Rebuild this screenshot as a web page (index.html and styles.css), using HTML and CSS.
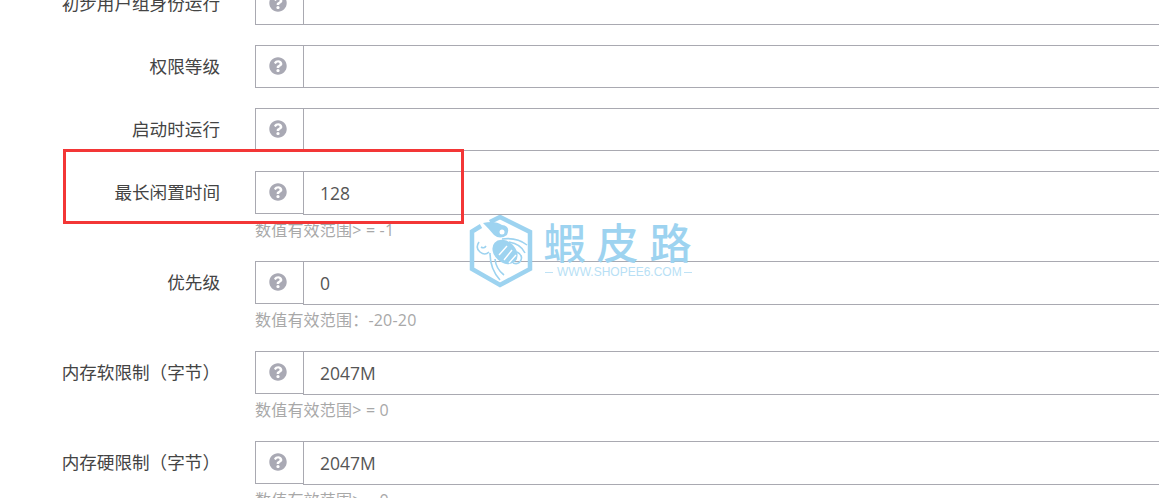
FILE: index.html
```html
<!DOCTYPE html>
<html lang="zh">
<head>
<meta charset="utf-8">
<title>最长闲置时间</title>
<link rel="stylesheet" href="styles.css">
</head>
<body>
<svg width="0" height="0" class="defs"><symbol id="q" viewBox="0 0 512 512"><path d="M504 256c0 136.997-111.043 248-248 248S8 392.997 8 256C8 119.083 119.043 8 256 8s248 111.083 248 248zM262.655 90c-54.497 0-89.255 22.957-116.549 63.758-3.536 5.286-2.353 12.415 2.715 16.258l34.699 26.31c5.205 3.947 12.621 3.008 16.665-2.122 17.864-22.658 30.113-35.797 57.303-35.797 20.429 0 45.698 13.148 45.698 32.958 0 14.976-12.363 22.667-32.534 33.976C247.128 238.528 216 254.941 216 296v4c0 6.627 5.373 12 12 12h56c6.627 0 12-5.373 12-12v-1.333c0-28.462 83.186-29.647 83.186-106.667 0-58.002-60.165-102-116.531-102zM256 338c-25.365 0-46 20.635-46 46 0 25.364 20.635 46 46 46s46-20.636 46-46c0-25.365-20.635-46-46-46z"/></symbol></svg>
<main class="form">
  <div class="row"><label class="label">初步用户组身份运行</label><div class="group"><span class="addon"><svg class="qicon"><use href="#q"/></svg></span><input class="input" value=""></div></div>
  <div class="row"><label class="label">权限等级</label><div class="group"><span class="addon"><svg class="qicon"><use href="#q"/></svg></span><input class="input" value=""></div></div>
  <div class="row"><label class="label">启动时运行</label><div class="group"><span class="addon"><svg class="qicon"><use href="#q"/></svg></span><input class="input" value=""></div></div>
  <div class="row"><label class="label">最长闲置时间</label><div class="group"><span class="addon"><svg class="qicon"><use href="#q"/></svg></span><input class="input filled" value="128"></div><p class="help">数值有效范围&gt; = -1</p></div>
  <div class="row"><label class="label">优先级</label><div class="group"><span class="addon"><svg class="qicon"><use href="#q"/></svg></span><input class="input filled" value="0"></div><p class="help">数值有效范围：-20-20</p></div>
  <div class="row"><label class="label">内存软限制（字节）</label><div class="group"><span class="addon"><svg class="qicon"><use href="#q"/></svg></span><input class="input filled" value="2047M"></div><p class="help">数值有效范围&gt; = 0</p></div>
  <div class="row"><label class="label">内存硬限制（字节）</label><div class="group"><span class="addon"><svg class="qicon"><use href="#q"/></svg></span><input class="input filled" value="2047M"></div><p class="help">数值有效范围&gt; = 0</p></div>
</main>
<div class="highlight"></div>
<svg class="watermark" width="226" height="74" viewBox="0 0 226 74">
  <path class="wm-hex" d="M12 11 L3 16.500 V54 L31 70 L61 54 V17 L31 2 L21 7"/>
  <path class="wm-fill" d="M14 8 Q26 5 33 10 Q42 11 38 20 Q31 25 25 20 Q20 14 14 8Z"/>
  <circle cx="33" cy="17" r="2.500" fill="#fff"/>
  <ellipse class="wm-fill" cx="36" cy="37" rx="14" ry="10.500" transform="rotate(42 36 37)"/>
  <path class="wm-cut" d="M30 40 L38 31 M35 45 L43 35 M40 48 L47 40"/>
  <path class="wm-line" d="M33 24 Q48 22 58 30 M40 27 Q52 29 56 38 M48 37 Q54 40 52 45 Q50 50 44 48 M10 27 Q6 33 11 37 Q16 41 20 37 M12 32 Q15 34 17 31 M21 38 Q21 54 31 65 M26 44 Q27 54 35 60"/>
  <text class="wm-title" x="74.500" y="43.500">蝦皮路</text>
  <path class="wm-dash" d="M76 57.500H84 M215 57.500H223"/>
  <text class="wm-url" x="88" y="61">WWW.SHOPEE6.COM</text>
</svg>
</body>
</html>
```
FILE: styles.css
```css
html, body {
  margin: 0;
  height: 498px;
  overflow: hidden;
  background: #fff;
}
.defs { position: absolute; }
.form {
  display: flex;
  flex-direction: column;
  margin-top: -18px;
  font-family: "Open Sans", "Noto Sans CJK SC", sans-serif;
}
.row {
  display: grid;
  grid-template-columns: 220px 1fr;
  column-gap: 35px;
  margin-bottom: 20px;
}
.label {
  text-align: right;
  font-size: 17.6px;
  line-height: 42px;
  color: #444;
  font-family: "Noto Sans CJK SC", sans-serif;
  white-space: nowrap;
}
.group {
  display: flex;
  align-items: flex-start;
  margin-right: -2px;
}
.addon {
  box-sizing: border-box;
  flex: none;
  width: 48px;
  height: 43px;
  padding: 0 3px 1px 0;
  display: flex;
  align-items: center;
  justify-content: center;
  border: 1px solid #a9a9b1;
  border-right: 0;
}
.qicon { width: 18px; height: 18px; fill: #a9a9b4; }
.input {
  box-sizing: border-box;
  flex: 1;
  min-width: 0;
  height: 43px;
  margin: 0;
  padding: 0 16px;
  border: 1px solid #a9a9b1;
  border-radius: 0;
  outline: 0;
  background: transparent;
  font: 17.5px "Open Sans", sans-serif;
  color: #555;
}
.filled { height: 44px; }
.help {
  grid-column: 2;
  margin: 0;
  height: 26px;
  font-size: 16px;
  line-height: 31px;
  letter-spacing: .2px;
  color: #a8a8a8;
  white-space: nowrap;
}
.highlight {
  position: absolute;
  left: 63px;
  top: 149px;
  width: 395px;
  height: 69px;
  border: 3px solid #f33636;
}
.watermark {
  position: absolute;
  left: 469px;
  top: 215px;
}
.wm-hex {
  fill: none;
  stroke: #9dd3f0;
  stroke-width: 4.5;
}
.wm-fill { fill: #9dd3f0; }
.wm-cut {
  fill: none;
  stroke: #fff;
  stroke-width: 1.4;
}
.wm-line {
  fill: none;
  stroke: #9dd3f0;
  stroke-width: 1.6;
}
.wm-title {
  font: 500 42px "Noto Sans CJK SC", sans-serif;
  letter-spacing: 11px;
  fill: #9dd3f0;
}
.wm-dash {
  stroke: #bfe2f5;
  stroke-width: 1;
}
.wm-url {
  font: 12px "Liberation Sans", sans-serif;
  fill: #b8dff5;
}
```
